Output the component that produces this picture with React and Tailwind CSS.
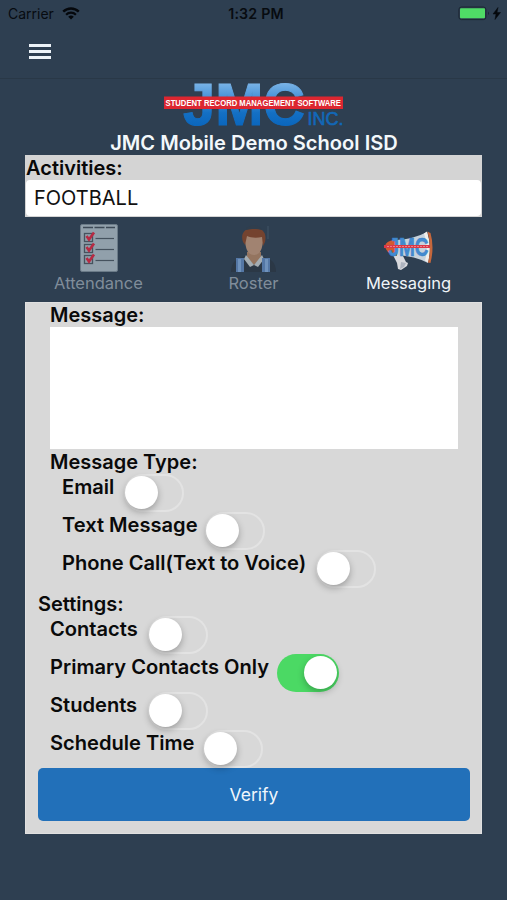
import React, { useState } from "react";

function WifiIcon() {
  return (
    <svg width="18" height="13" viewBox="0 0 18 13" className="ml-[6px]">
      <path d="M1.2 4.6a11.2 11.2 0 0 1 15.6 0" fill="none" stroke="#05080c" strokeWidth="2.4" />
      <path d="M4.1 7.7a7 7 0 0 1 9.8 0" fill="none" stroke="#05080c" strokeWidth="2.2" />
      <path d="M9 12.6 6.2 9.8a4 4 0 0 1 5.600 0z" fill="#05080c" />
    </svg>
  );
}

function StatusBar() {
  return (
    <div className="grid h-[27px] grid-cols-3 items-center text-[14px] text-[#070b10]">
      <div className="flex items-center pl-2">
        <span className="w-[48px] whitespace-nowrap">Carrier</span>
        <WifiIcon />
      </div>
      <div className="pl-[5px] text-center text-[14.2px] font-semibold tracking-[0.2px]">1:32 PM</div>
      <div className="flex items-center justify-end pr-[5px]">
        <svg width="44" height="15" viewBox="0 0 44 15">
          <rect x="0.900" y="1" width="27" height="12.600" rx="2.500" fill="none" stroke="#1c2733" strokeWidth="1" />
          <rect x="2" y="2.200" width="25" height="10" rx="1" fill="#4fdc66" />
          <path d="M30 5.500q2 1.800 0 3.600z" fill="#1c2733" />
          <path d="M40 1.500 35 8h3l-1 5.500L42.500 6.500h-3.500z" fill="#05080c" stroke="#05080c" strokeWidth="0.500" />
        </svg>
      </div>
    </div>
  );
}

function Logo() {
  return (
    <svg width="182" height="51" viewBox="0 0 182 51" className="mx-auto block">
      <defs>
        <linearGradient id="jmc" x1="0" y1="3" x2="0" y2="47" gradientUnits="userSpaceOnUse">
          <stop offset="0" stopColor="#7eb6e8" />
          <stop offset="0.4" stopColor="#3f8ed5" />
          <stop offset="0.7" stopColor="#1470c4" />
          <stop offset="1" stopColor="#0a66bd" />
        </linearGradient>
      </defs>
      <g fill="url(#jmc)" stroke="url(#jmc)" fontFamily="Liberation Sans, sans-serif" fontWeight="700" fontSize="60">
        <text x="20" y="45.500" textLength="122" lengthAdjust="spacingAndGlyphs">JMC</text>
      </g>
      <text x="144.500" y="45.500" fill="#1268b8" stroke="#1268b8" strokeWidth="0.600" fontFamily="Liberation Sans, sans-serif" fontSize="18" textLength="36" lengthAdjust="spacingAndGlyphs">INC.</text>
      <rect x="1" y="17.500" width="179" height="12.500" fill="#dc2630" />
      <text x="2.500" y="27.300" fill="#fff" fontFamily="Liberation Sans, sans-serif" fontWeight="700" fontSize="9.800" textLength="175.500" lengthAdjust="spacingAndGlyphs">STUDENT RECORD MANAGEMENT SOFTWARE</text>
    </svg>
  );
}

function AttendanceIcon() {
  return (
    <svg width="38" height="48" viewBox="0 0 38 48">
      <rect x="0.500" y="0.500" width="37" height="47" rx="1.500" fill="#91a0ab" stroke="#6b7b88" />
      <path d="M3 3.500h32" stroke="#3d4a57" strokeWidth="1.600" strokeDasharray="10 1.500" />
      {[8, 19, 30].map((y) => (
        <g key={y}>
          <rect x="4.500" y={y + 1.500} width="8" height="8" fill="none" stroke="#46535f" strokeWidth="1.300" />
          <path d={`M6.500 ${y + 4}l2.500 3.500 5-7`} fill="none" stroke="#b72a43" strokeWidth="2.600" />
          <path d={`M15.500 ${y + 6.500}h18.500`} stroke="#45525e" strokeWidth="1.200" />
        </g>
      ))}
    </svg>
  );
}

function RosterIcon() {
  return (
    <svg width="50" height="48" viewBox="0 0 50 48">
      <path d="M2 48c0-9 4-13 14-16h17c10 3 14 7 14 16z" fill="#2b3846" />
      <path d="M18 28h14v6l-7 7-7-7z" fill="#94745f" />
      <path d="m17 31 8 10-4 2-6-8zM33 31l-8 10 4 2 6-8z" fill="#a4adb3" />
      <path d="M7 34h8v14H7zM33 34h8v14h-8z" fill="#5477a5" />
      <path d="M9 35h3v13H9zM36 35h3v13h-3z" fill="#6f92bc" />
      <path d="M15 14c0-8 5-10 10-10s10 2 10 10l-2 9c-1 5-4 8-8 8s-7-3-8-8z" fill="#a18371" />
      <path d="M14 18C11 9 16 4 25 4s13 5 11 14l-2 4-1-9c-5 1-11 1-15-1l-2 9z" fill="#74432f" />
      <path d="M17 6c1-6 14-6 16 0-4-1.500-11-1.500-16 0z" fill="#303e4d" />
      <path d="M39 2v13" stroke="#415467" strokeWidth="1" />
    </svg>
  );
}

function MessagingIcon() {
  return (
    <svg width="50" height="48" viewBox="0 0 50 48">
      <path d="m9 31 9-1 4 8 2 1-1 3-6 4-3-1-1-6z" fill="#d8d9dd" />
      <path d="m17 38 5 1-2 4-4 2z" fill="#aeb4bf" />
      <path d="M1 22q1-5 9-6l3-1v17l-3-1q-8-2-9-9z" fill="#d3592f" />
      <path d="M12 16q18-1 31-8 4 16 1 31-13-7-31-8z" fill="#c6d2dc" />
      <path d="M43 7.500q5 15 1 31l-3-2q4-14-1-27z" fill="#f1eeea" />
      <path d="M43.500 7.500q2 1 3 1.500 4 14 0 30l-2.500-.5q4-15-.5-31z" fill="#c5673c" />
      <text x="4.500" y="32" fill="#438bd0" stroke="#347dc6" strokeWidth="0.500" fontFamily="Liberation Sans, sans-serif" fontWeight="700" fontSize="25" textLength="40" lengthAdjust="spacingAndGlyphs">JMC</text>
      <path d="M0 22.500h46" stroke="#dc3946" strokeWidth="3" />
      <path d="M3 22.500h41" stroke="#f0a0a8" strokeWidth="0.700" strokeDasharray="2 1" />
    </svg>
  );
}

function Tab({ icon, label, active }) {
  return (
    <button className="flex w-[155px] shrink-0 flex-col items-center">
      <span className="flex h-[48px] items-center">{icon}</span>
      <span className={`flex h-[22px] items-center whitespace-nowrap text-[16.5px] leading-[22px] ${active ? "text-[#f0f4f8]" : "text-[#808d9a]"}`}>
        {label}
      </span>
    </button>
  );
}

function Toggle({ on, onClick }) {
  return on ? (
    <button onClick={onClick} className="flex h-[38px] w-[62px] items-start justify-end rounded-full bg-[#4bd964] pt-[2px] pr-[2px]">
      <span className="size-[33px] rounded-full bg-white shadow-[0_3px_7px_rgba(0,0,0,0.25)]" />
    </button>
  ) : (
    <button onClick={onClick} className="flex h-[38px] w-[60px] items-start rounded-full border-2 border-[#e3e3e3] bg-[#d8d8d8]">
      <span className="-ml-px size-[33px] shrink-0 rounded-full bg-white shadow-[0_3px_7px_rgba(0,0,0,0.28)]" />
    </button>
  );
}

function Row({ label, width, initial = false }) {
  const [on, setOn] = useState(initial);
  return (
    <div className="flex h-[38px] items-start">
      <span className={`${width} shrink-0 whitespace-nowrap text-[20.1px] leading-[26px]`}>{label}</span>
      <Toggle on={on} onClick={() => setOn(!on)} />
    </div>
  );
}

export default function App() {
  return (
    <div className="h-[900px] w-[507px] overflow-hidden bg-[#2e3f51] font-['Inter','Liberation_Sans',sans-serif] text-[20px]">
      <StatusBar />
      <header className="flex h-[52px] items-start border-b border-[#293847] pl-[29px] pt-[17px]">
        <button className="flex w-[22px] flex-col gap-[3px]">
          <span className="h-[3px] bg-[#edf3f8]" />
          <span className="h-[3px] bg-[#edf3f8]" />
          <span className="h-[3px] bg-[#edf3f8]" />
        </button>
      </header>
      <Logo />
      <h1 className="flex h-[25px] items-center justify-center whitespace-nowrap pl-px pt-px text-[20.1px] font-semibold text-[#f3f8fb]">
        JMC Mobile Demo School ISD
      </h1>
      <main className="mx-[25px]">
        <section className="h-[62px] bg-[#d4d4d4]">
          <div className="flex h-[25px] items-center pl-px font-semibold text-[#080808]">Activities:</div>
          <div className="mx-px flex h-[36px] items-center rounded-[4px] bg-white pl-2 text-[#111]">FOOTBALL</div>
        </section>
        <nav className="-ml-[4px] flex h-[85px] pt-[7px]">
          <Tab icon={<AttendanceIcon />} label="Attendance" />
          <Tab icon={<RosterIcon />} label="Roster" />
          <Tab icon={<MessagingIcon />} label="Messaging" active />
        </nav>
        <section className="h-[532px] border border-[#e0e0e0] bg-[#d8d8d8] px-3 font-semibold text-[#0a0a0a]">
          <div className="px-3">
            <div className="h-[24px] leading-[24px]">Message:</div>
            <textarea className="block h-[122px] w-[408px] resize-none bg-white outline-none" />
            <div className="h-[25px] leading-[26px]">Message Type:</div>
            <div className="pl-3">
              <Row label="Email" width="w-[62px]" />
              <Row label="Text Message" width="w-[143px]" />
              <Row label="Phone Call(Text to Voice)" width="w-[254px]" />
            </div>
          </div>
          <div className="mt-[4px] h-[24px] leading-[24px]">Settings:</div>
          <div className="pl-3">
            <Row label="Contacts" width="w-[98px]" />
            <Row label="Primary Contacts Only" width="w-[227px]" initial />
            <Row label="Students" width="w-[98px]" />
            <Row label="Schedule Time" width="w-[153px]" />
          </div>
          <button className="flex h-[53px] w-[432px] items-center justify-center rounded-[5px] bg-[#2270b9] pt-px text-[17.5px] font-normal text-[#f0f6fc]">
            Verify
          </button>
        </section>
      </main>
    </div>
  );
}
